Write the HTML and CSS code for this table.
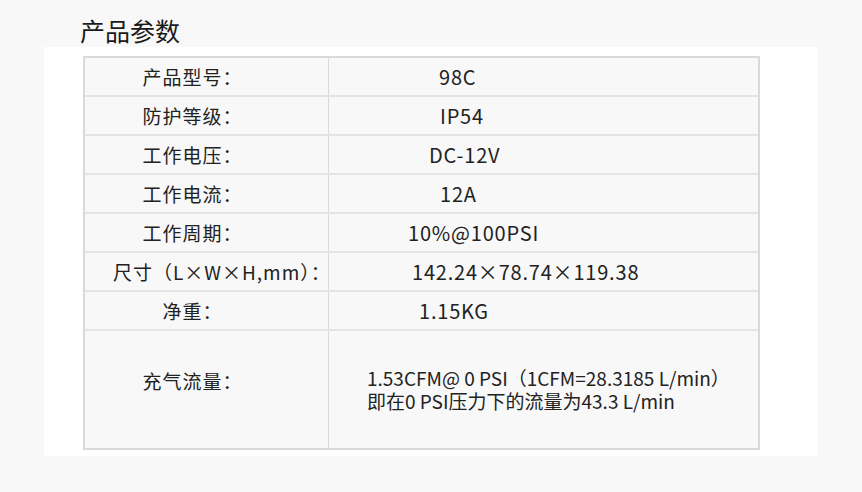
FILE: index.html
```html
<!DOCTYPE html>
<html lang="zh-CN">
<head>
<meta charset="utf-8">
<title>产品参数</title>
<link rel="stylesheet" href="styles.css">
</head>
<body>
<h2 class="title">产品参数</h2>
<div class="panel">
  <div class="spec">
    <div class="row"><div class="label">产品型号：</div><div class="value v-model">98C</div></div>
    <div class="row"><div class="label">防护等级：</div><div class="value v-ip">IP54</div></div>
    <div class="row"><div class="label">工作电压：</div><div class="value v-volt">DC-12V</div></div>
    <div class="row"><div class="label">工作电流：</div><div class="value v-amp">12A</div></div>
    <div class="row"><div class="label">工作周期：</div><div class="value v-duty">10%@100PSI</div></div>
    <div class="row"><div class="label">尺寸（L×W×H,mm）：</div><div class="value v-size">142.24×78.74×119.38</div></div>
    <div class="row"><div class="label">净重：</div><div class="value v-weight">1.15KG</div></div>
    <div class="row row-tall"><div class="label label-tall">充气流量：</div><div class="value v-flow"><p class="line">1.53CFM@ 0 PSI（1CFM=28.3185 L/min）</p><p class="line">即在0 PSI压力下的流量为43.3 L/min</p></div></div>
  </div>
</div>
</body>
</html>
```
FILE: styles.css
```css
html, body {
  margin: 0;
  padding: 0;
  background: #f8f8f8;
  font-family: "Noto Sans CJK SC", "Noto Sans", sans-serif;
  color: #222;
}

.title {
  margin: 0;
  padding: 13px 0 0 80px;
  height: 34px;
  line-height: 34px;
  font-size: 25px;
  font-weight: normal;
  color: #1a1a1a;
}

.panel {
  margin-left: 44px;
  width: 774px;
  box-sizing: border-box;
  background: #fff;
  padding: 9px 0 6px 39px;
}

.spec {
  width: 677px;
  box-sizing: border-box;
  border: 2px solid #dadada;
  background: #f8f8f8;
}

.row {
  display: grid;
  grid-template-columns: 244px 1fr;
  height: 37px;
  border-bottom: 2px solid #e4e4e4;
}

.row-tall {
  height: 117px;
  border-bottom: none;
}

.label {
  padding: 0 56px 0 28px;
  line-height: 37px;
  font-size: 19px;
  letter-spacing: 1px;
  text-align: center;
  white-space: nowrap;
  border-right: 1px solid #dadada;
  min-width: 0;
}

.label-tall {
  line-height: 99px;
}

.value {
  line-height: 37px;
  font-size: 20px;
  letter-spacing: 0.8px;
  white-space: nowrap;
}

.v-model { padding-left: 110px; }
.v-ip { padding-left: 111px; }
.v-volt { padding-left: 100px; }
.v-amp { padding-left: 111px; }
.v-duty { padding-left: 79px; }
.v-size { padding-left: 83px; }
.v-weight { padding-left: 90px; }
.v-flow {
  padding: 35px 0 0 38px;
  font-size: 19px;
  letter-spacing: 0;
}

.line {
  margin: 0;
  height: 23px;
  line-height: 23px;
}
```
